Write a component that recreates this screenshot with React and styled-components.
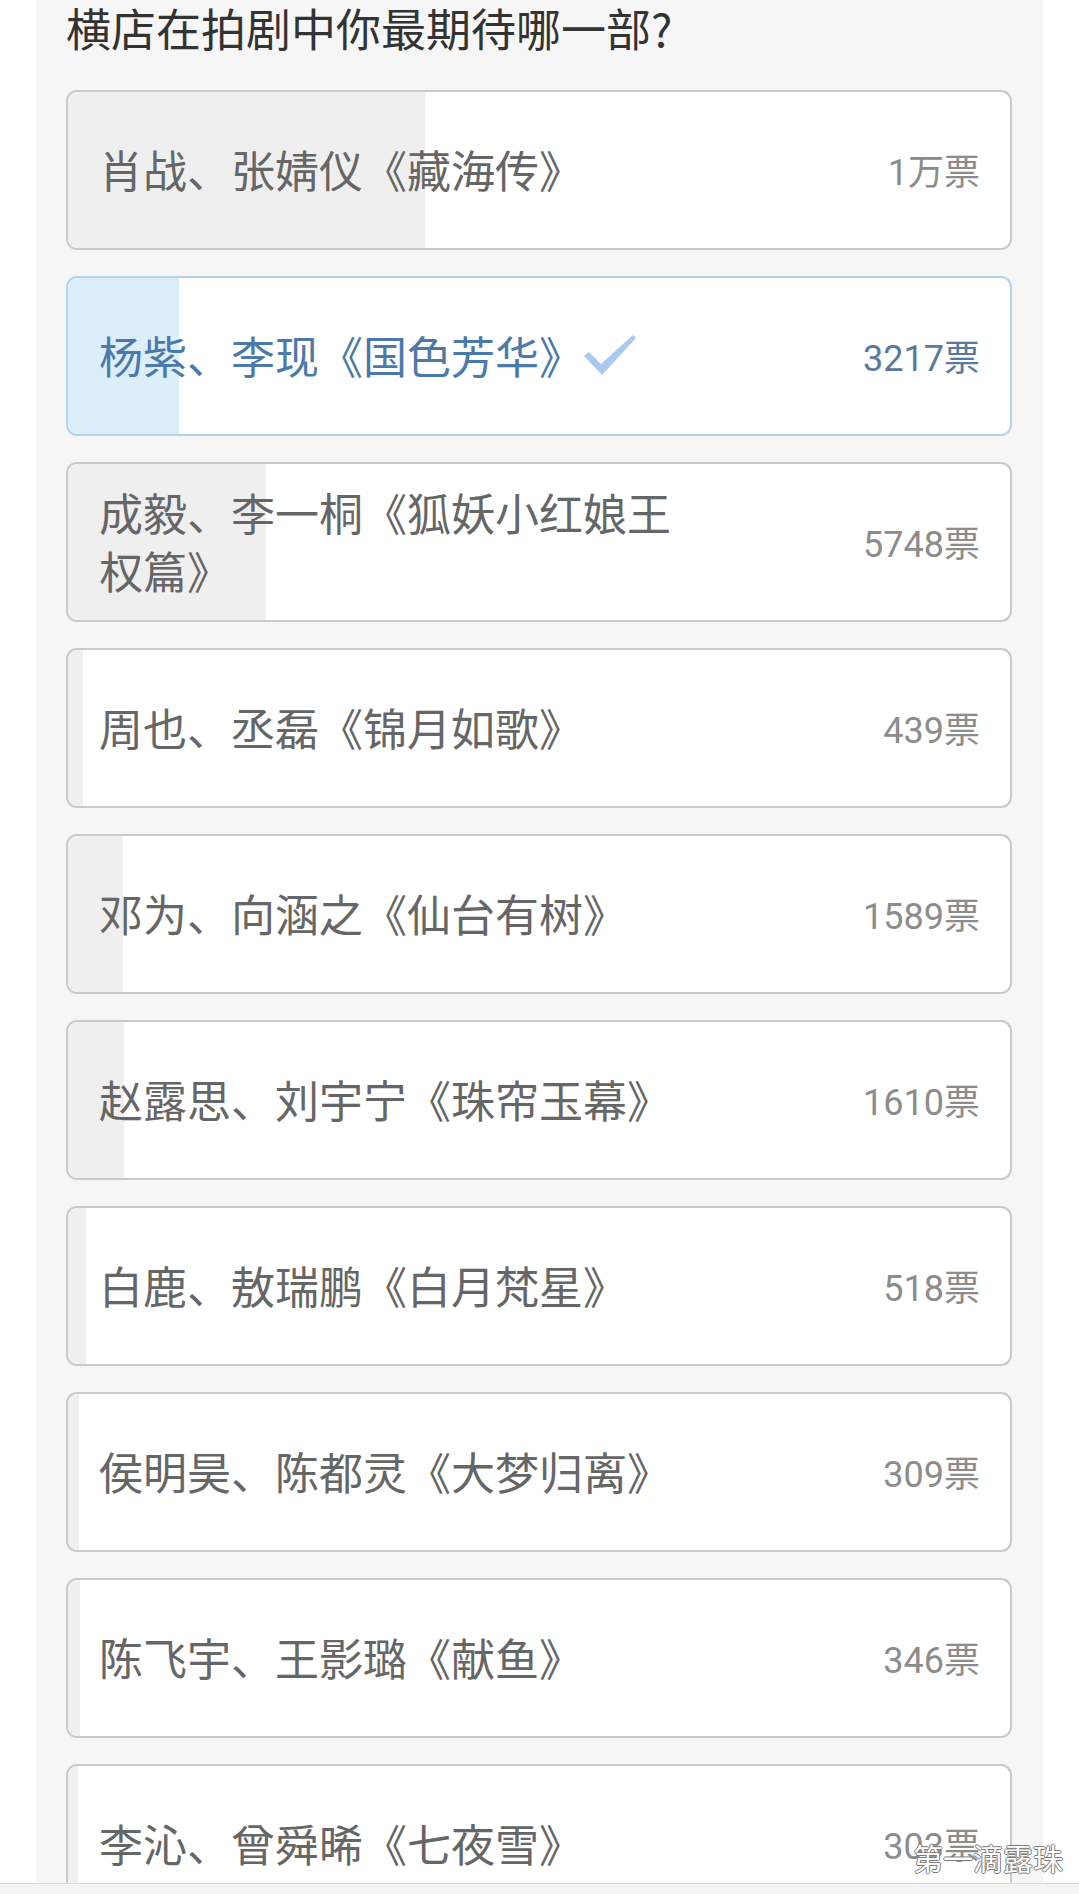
import React from "react";
import styled, { createGlobalStyle } from "styled-components";

const GlobalStyle = createGlobalStyle`
  html, body {
    margin: 0;
    padding: 0;
    background: #ffffff;
  }
  body {
    font-family: "Noto Sans CJK SC", "Noto Sans", sans-serif;
    text-spacing-trim: space-all;
    font-feature-settings: "halt" 0, "chws" 0;
  }
`;

const TOTAL = 27300;

const options = [
  { label: "肖战、张婧仪《藏海传》", votes: 10360, text: "1万票" },
  { label: "杨紫、李现《国色芳华》", votes: 3217, text: "3217票", chosen: true },
  { label: "成毅、李一桐《狐妖小红娘王权篇》", votes: 5748, text: "5748票" },
  { label: "周也、丞磊《锦月如歌》", votes: 439, text: "439票" },
  { label: "邓为、向涵之《仙台有树》", votes: 1589, text: "1589票" },
  { label: "赵露思、刘宇宁《珠帘玉幕》", votes: 1610, text: "1610票" },
  { label: "白鹿、敖瑞鹏《白月梵星》", votes: 518, text: "518票" },
  { label: "侯明昊、陈都灵《大梦归离》", votes: 309, text: "309票" },
  { label: "陈飞宇、王影璐《献鱼》", votes: 346, text: "346票" },
  { label: "李沁、曾舜晞《七夜雪》", votes: 303, text: "303票" },
];

const Screen = styled.div`
  position: relative;
  height: 1894px;
  display: flex;
  flex-direction: column;
  overflow: hidden;
  background: #ffffff;
`;

const Viewport = styled.div`
  flex: 1;
  overflow: hidden;
  padding: 0 36px;
`;

const Panel = styled.section`
  background: #f6f6f6;
  padding: 0 31px 40px 30px;
  min-height: 100%;
`;

const Title = styled.h1`
  margin: 0 0 35px;
  font-size: 45px;
  line-height: 55px;
  font-weight: normal;
  color: #333333;
  white-space: nowrap;
`;

const List = styled.div`
  display: flex;
  flex-direction: column;
  gap: 26px;
`;

const Card = styled.div`
  position: relative;
  box-sizing: border-box;
  height: 160px;
  border: 2px solid ${(p) => (p.$chosen ? "#b4d3ec" : "#c9c9c9")};
  border-radius: 11px;
  background: #ffffff;
  overflow: hidden;
  display: flex;
  align-items: center;
  justify-content: space-between;
  padding: 0 30px 3px 31px;
`;

const Fill = styled.div`
  position: absolute;
  left: 0;
  top: 0;
  bottom: 0;
  background: ${(p) => (p.$chosen ? "#ddeefb" : "#efefef")};
`;

const Label = styled.div`
  position: relative;
  max-width: 590px;
  font-family: "Noto Sans CJK JP", "Noto Sans CJK SC", sans-serif;
  font-size: 44px;
  line-height: 58px;
  color: ${(p) => (p.$chosen ? "#4b79aa" : "#666666")};
  display: flex;
  align-items: center;
`;

const LabelText = styled.span`
  flex: 0 1 auto;
`;

const Check = styled.svg`
  flex: none;
  width: 54px;
  height: 42px;
  margin-left: 0;
`;

const Count = styled.div`
  position: relative;
  flex: none;
  font-family: Roboto, "Noto Sans CJK SC", sans-serif;
  font-size: 36px;
  color: ${(p) => (p.$chosen ? "#587a9c" : "#8c8c8c")};
`;

const Footer = styled.div`
  height: 10px;
  border-top: 1px solid #dadada;
  background: #f3f3f3;
`;

const Watermark = styled.div`
  position: absolute;
  right: 16px;
  bottom: 20px;
  font-size: 30px;
  line-height: 34px;
  color: #ffffff;
  text-shadow: 1px 0 0 #7a7a7a, -1px 0 0 #7a7a7a, 0 1px 0 #7a7a7a,
    0 -1px 0 #7a7a7a;
`;

const Option = ({ label, votes, text, chosen }) => (
  <Card $chosen={chosen}>
    <Fill $chosen={chosen} style={{ width: `${(votes / TOTAL) * 100}%` }} />
    <Label $chosen={chosen}>
      <LabelText>{label}</LabelText>
      {chosen && (
        <Check viewBox="0 0 54 42">
          <path d="M1 22 L6 18 L18 30 L50 1 L53 4 L19 41 Z" fill="#a9c9ee" />
        </Check>
      )}
    </Label>
    <Count $chosen={chosen}>{text}</Count>
  </Card>
);

const App = () => (
  <Screen>
    <GlobalStyle />
    <Viewport>
      <Panel>
        <Title>横店在拍剧中你最期待哪一部?</Title>
        <List>
          {options.map((o) => (
            <Option key={o.label} {...o} />
          ))}
        </List>
      </Panel>
    </Viewport>
    <Footer />
    <Watermark>第一滴露珠</Watermark>
  </Screen>
);

export default App;
